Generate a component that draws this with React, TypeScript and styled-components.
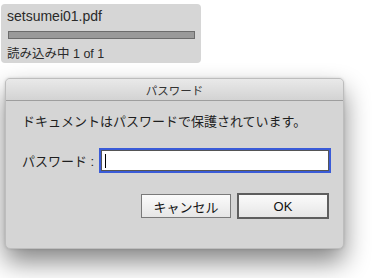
import React from 'react'
import styled, { createGlobalStyle } from 'styled-components'

const GlobalStyle = createGlobalStyle`
    html, body {
        margin: 0;
        padding: 0;
        background: #ffffff;
    }
    body {
        width: 384px;
        height: 278px;
        overflow: hidden;
        font-family: "Liberation Sans", "Noto Sans CJK JP", sans-serif;
        color: #222;
    }
`

const Page = styled.div`
    display: flex;
    flex-direction: column;
    align-items: flex-start;
`

const LoadingPanel = styled.div`
    margin: 4px 0 0 1px;
    width: 200px;
    height: 59px;
    box-sizing: border-box;
    padding: 3px 6px 0 6px;
    border-radius: 4px;
    background: #d6d6d6;
    display: flex;
    flex-direction: column;
`

const FileName = styled.div`
    font-size: 14px;
    line-height: 18px;
    color: #2a2a2a;
`

const ProgressTrack = styled.div`
    margin: 6px 0 0 1px;
    width: 187px;
    height: 8px;
    box-sizing: border-box;
    border: 1px solid #6c6c6c;
    background: #9a9a9a;
`

const Status = styled.div`
    margin-top: 6px;
    font-size: 12.5px;
    line-height: 18px;
    color: #2a2a2a;
`

const Dialog = styled.div`
    margin: 15px 0 0 5px;
    width: 339px;
    height: 171px;
    box-sizing: border-box;
    border: 1px solid #bdbdbd;
    border-radius: 5px;
    background: #d5d5d5;
    box-shadow: 0 13px 26px rgba(0, 0, 0, 0.48), 0 0 3px rgba(0, 0, 0, 0.15);
    display: flex;
    flex-direction: column;
    overflow: hidden;
`

const TitleBar = styled.div`
    height: 21px;
    border-bottom: 1px solid #9e9e9e;
    background: linear-gradient(#e9e9e9, #d3d3d3);
    display: flex;
    align-items: center;
    justify-content: center;
    font-size: 11.5px;
    color: #333;
`

const Body = styled.div`
    padding: 13px 14px 0 16px;
    display: flex;
    flex-direction: column;
`

const Message = styled.div`
    font-size: 13px;
    line-height: 16px;
    color: #1e1e1e;
`

const FieldRow = styled.div`
    margin-top: 20px;
    display: flex;
    align-items: center;
`

const Label = styled.label`
    width: 79px;
    font-size: 13px;
    color: #1e1e1e;
    white-space: nowrap;
`

const Input = styled.div`
    width: 228px;
    height: 21px;
    box-sizing: border-box;
    border: 1px solid #555;
    background: #fff;
    box-shadow: 0 0 0 2px #3a5bd8;
    display: flex;
    align-items: center;
    padding-left: 3px;
`

const Caret = styled.span`
    width: 1px;
    height: 14px;
    background: #000;
`

const Buttons = styled.div`
    margin-top: 22px;
    display: flex;
    justify-content: flex-end;
    align-items: center;
    gap: 6px;
`

const Button = styled.button<{ $primary?: boolean }>`
    width: ${p => (p.$primary ? '92px' : '90px')};
    height: ${p => (p.$primary ? '26px' : '24px')};
    box-sizing: border-box;
    border: ${p => (p.$primary ? '2px solid #5e5e5e' : '1px solid #7a7a7a')};
    background: linear-gradient(#fbfbfb, #e6e6e6);
    font-family: "Liberation Sans", "Noto Sans CJK JP", sans-serif;
    font-size: 13px;
    color: #111;
    padding: 0;
`

export default function App() {
    return (
        <>
            <GlobalStyle />
            <Page>
                <LoadingPanel>
                    <FileName>setsumei01.pdf</FileName>
                    <ProgressTrack />
                    <Status>読み込み中 1 of 1</Status>
                </LoadingPanel>
                <Dialog>
                    <TitleBar>パスワード</TitleBar>
                    <Body>
                        <Message>ドキュメントはパスワードで保護されています。</Message>
                        <FieldRow>
                            <Label>パスワード :</Label>
                            <Input>
                                <Caret />
                            </Input>
                        </FieldRow>
                        <Buttons>
                            <Button>キャンセル</Button>
                            <Button $primary>OK</Button>
                        </Buttons>
                    </Body>
                </Dialog>
            </Page>
        </>
    )
}
